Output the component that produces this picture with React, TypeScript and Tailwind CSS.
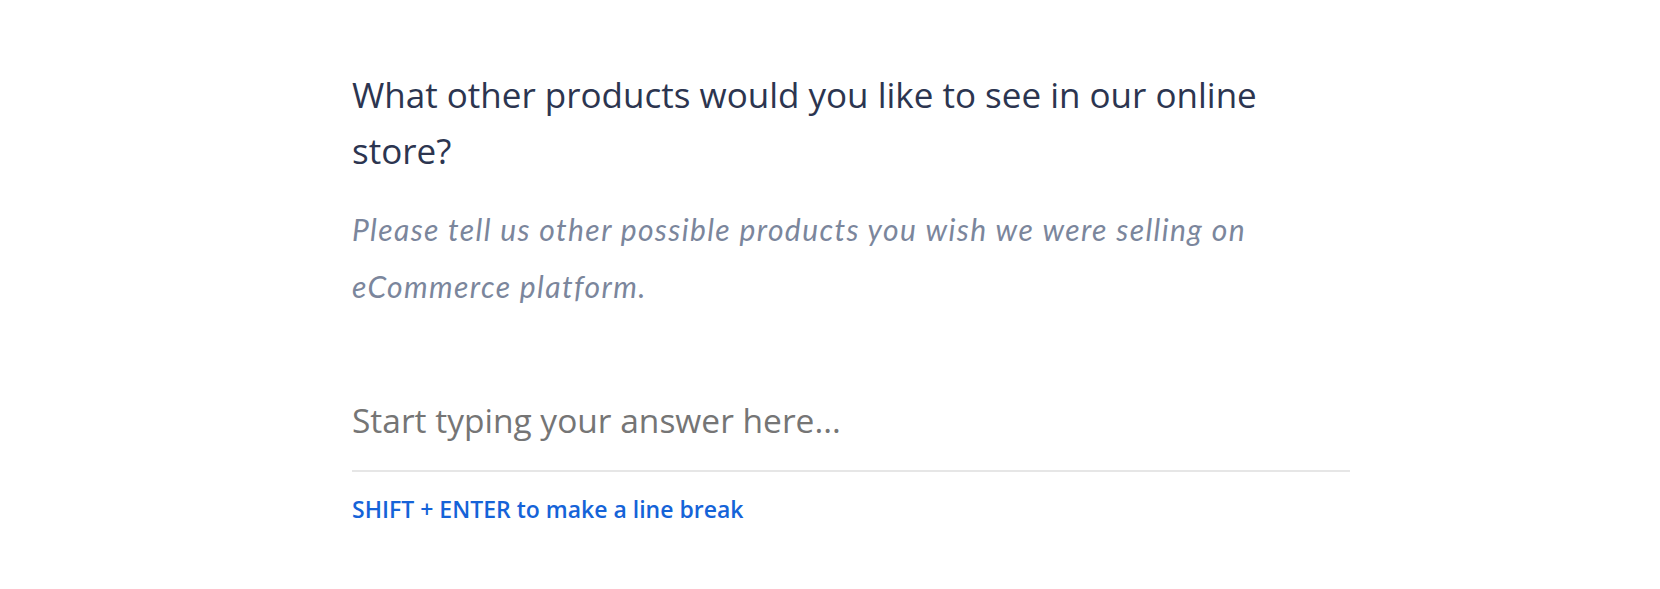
import { useState } from 'react';

export default function App() {
  const [answer, setAnswer] = useState('');

  return (
    <div className="min-h-[589px] w-full bg-white">
      <div className="pl-[352px] pt-[67px]">
        <div className="w-[998px]">
          <h1 className="text-[35px] leading-[56px] text-[#2c3550] font-normal font-['Open_Sans',sans-serif]">
            What other products would you like to see in our online store?
          </h1>
          <p className="mt-[22px] text-[30px] leading-[57px] italic tracking-[1.4px] text-[#7b869c] font-['Lato',sans-serif]">
            Please tell us other possible products you wish we were selling on eCommerce platform.
          </p>

          <div className="mt-[73px] border-b-2 border-[#e6e6e6] pb-[18px]">
            <input
              value={answer}
              onChange={(e) => setAnswer(e.target.value)}
              placeholder="Start typing your answer here..."
              className="w-full h-[64px] bg-transparent outline-none text-[33.5px] text-[#444] placeholder:text-[#757575] font-['Open_Sans',sans-serif]"
            />
          </div>
          <p className="mt-[22px] text-[23px] leading-[30px] font-semibold text-[#1563d8] font-['Open_Sans',sans-serif]">
            SHIFT + ENTER to make a line break
          </p>
        </div>
      </div>
    </div>
  );
}
